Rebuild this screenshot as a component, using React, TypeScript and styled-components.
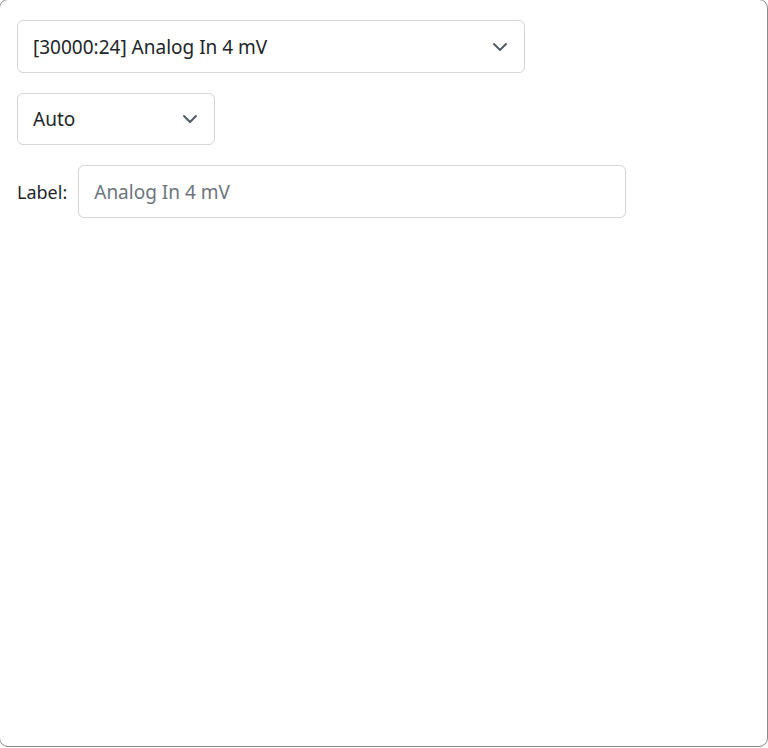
import React from 'react';
import styled, { createGlobalStyle } from 'styled-components';

const GlobalStyle = createGlobalStyle`
    html, body {
        margin: 0;
        padding: 0;
        background: #ffffff;
    }
    body {
        font-family: "Noto Sans", "Open Sans", "Liberation Sans", sans-serif;
        color: #212529;
    }
`;

const Panel = styled.div`
    box-sizing: border-box;
    width: 769px;
    height: 748px;
    margin: -1px 0 0 -1px;
    border: 1px solid #8a8a8a;
    border-radius: 9px;
    background: #ffffff;
    padding: 20px 17px;
    display: flex;
    flex-direction: column;
    align-items: flex-start;
    gap: 20px;
`;

const SelectBox = styled.div<{ width: number; height: number }>`
    box-sizing: border-box;
    width: ${(p) => p.width}px;
    height: ${(p) => p.height}px;
    border: 1px solid #d3d6da;
    border-radius: 6px;
    padding: 0 16px 0 15px;
    display: flex;
    align-items: center;
    justify-content: space-between;
    font-size: 19px;
    color: #212529;
`;

const Chevron = styled.svg`
    width: 16px;
    height: 16px;
    flex: none;
`;

const LabelRow = styled.div`
    display: flex;
    align-items: center;
    gap: 11px;
`;

const LabelText = styled.span`
    font-size: 18px;
    color: #212529;
`;

const TextInput = styled.input`
    box-sizing: border-box;
    width: 548px;
    height: 53px;
    border: 1px solid #d3d6da;
    border-radius: 6px;
    padding: 0 15px;
    font-family: inherit;
    font-size: 19px;
    color: #212529;
    outline: none;

    &::placeholder {
        color: #6c757d;
    }
`;

function ChevronDown() {
    return (
        <Chevron viewBox="0 0 16 16">
            <path
                d="M2 5l6 6 6-6"
                fill="none"
                stroke="#555b66"
                strokeWidth="2"
                strokeLinecap="round"
                strokeLinejoin="round"
            />
        </Chevron>
    );
}

export default function App() {
    return (
        <>
            <GlobalStyle />
            <Panel>
                <SelectBox width={508} height={53}>
                    <span>[30000:24] Analog In 4 mV</span>
                    <ChevronDown />
                </SelectBox>
                <SelectBox width={198} height={52}>
                    <span>Auto</span>
                    <ChevronDown />
                </SelectBox>
                <LabelRow>
                    <LabelText>Label:</LabelText>
                    <TextInput placeholder="Analog In 4 mV" />
                </LabelRow>
            </Panel>
        </>
    );
}
